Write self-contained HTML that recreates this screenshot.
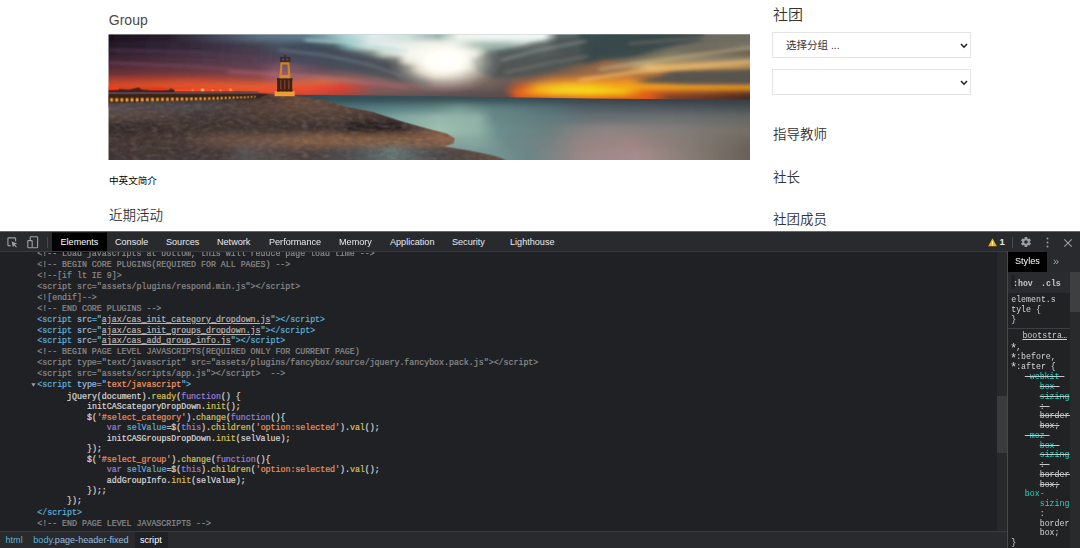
<!DOCTYPE html>
<html lang="zh">
<head>
<meta charset="utf-8">
<title>Group</title>
<style>
*{box-sizing:border-box;margin:0;padding:0}
html,body{width:1080px;height:548px;overflow:hidden;background:#fff}
body{position:relative;font-family:"Liberation Sans","Noto Sans CJK SC",sans-serif;color:#333}
.abs{position:absolute;white-space:nowrap}
/* ---------- page ---------- */
#page{position:absolute;left:0;top:0;width:1080px;height:231px;background:#fff;overflow:hidden}
.h-group{left:108.8px;top:11.2px;font-size:14px;line-height:18px;color:#4a4a4a;font-weight:400}
.cjk-h{font-size:13.5px;line-height:18px;color:#333;font-weight:350}
.sel{position:absolute;left:772px;width:199px;height:26px;border:1px solid #e4e4e4;background:#fff}
.sel span{position:absolute;left:13px;top:0;line-height:25px;font-size:10.5px;color:#333}
.sel svg{position:absolute;right:2px;top:9.5px}
#photo{position:absolute;left:108px;top:34px;width:643px;height:127px;overflow:hidden}
/* ---------- devtools ---------- */
#dt{position:absolute;left:0;top:231px;width:1080px;height:317px;background:#202124;overflow:hidden;font-family:"Liberation Sans",sans-serif}
#tb{position:absolute;left:0;top:0;width:1080px;height:20px;background:#292a2d;border-top:1px solid #67686a}
#tb .tab{position:absolute;top:0;transform:translateY(0.6px);height:19px;line-height:19px;font-size:9.1px;color:#e8eaed;white-space:nowrap}
#tb .act{left:52px;width:54.5px;background:#000;height:20px;top:0;color:#fff}
#tbline{position:absolute;left:0;top:20px;width:1080px;height:1px;background:#3a3b3e}
.code{position:absolute;left:0;font-family:"Liberation Mono",monospace;font-size:8.28px;line-height:11px;height:11px;white-space:pre;color:#d5d5d5;-webkit-text-stroke:0.22px}
.c{color:#898989}.t{color:#5db0d7}.an{color:#9bbbdc}.av{color:#f29766}
.k{color:#9a7fd5}.s{color:#f28b54}.f{color:#d2c057}.d{color:#5db0d7}
.u{text-decoration:underline}.lk{color:#b4b4b4}
#side{position:absolute;left:1007px;top:20px;width:73px;height:297px;background:#212224;border-left:1px solid #47484b;overflow:hidden}
.p{color:#27d6c7}.st{text-decoration:line-through;text-decoration-color:#c8c8c8}
.as{display:inline-block;width:4.97px;font-size:12px;line-height:0;position:relative;top:2.6px;left:-1.1px}
.sc{position:absolute;font-family:"Liberation Mono",monospace;font-size:8.25px;line-height:9.75px;white-space:pre;color:#d5d5d5}
#crumbs{position:absolute;left:0;top:300px;width:1007px;height:18px;background:#292a2d;border-top:1px solid #3a3b3e;font-size:9.1px;line-height:16px;white-space:nowrap}
</style>
</head>
<body>
<div id="page">
  <div class="abs h-group">Group</div>
  <div id="photo">
<svg width="643" height="127" viewBox="0 0 643 127" style="display:block">
<defs>
<linearGradient id="k0" gradientUnits="userSpaceOnUse" x1="-20" y1="0" x2="661" y2="0"><stop offset="0.0294" stop-color="#1a101c"/><stop offset="0.1175" stop-color="#2a1e2c"/><stop offset="0.1909" stop-color="#46485a"/><stop offset="0.2496" stop-color="#5a7080"/><stop offset="0.3157" stop-color="#5e7c8a"/><stop offset="0.3451" stop-color="#7a9ea6"/><stop offset="0.3744" stop-color="#a8d0d0"/><stop offset="0.4185" stop-color="#e0ecec"/><stop offset="0.4699" stop-color="#cfe0dc"/><stop offset="0.5140" stop-color="#8aa8a8"/><stop offset="0.5433" stop-color="#f0f8f4"/><stop offset="0.6681" stop-color="#f0f8f4"/><stop offset="0.6902" stop-color="#5a6a68"/><stop offset="0.7342" stop-color="#5a7878"/><stop offset="0.7636" stop-color="#3a4a4c"/><stop offset="0.8370" stop-color="#4a5452"/><stop offset="0.8957" stop-color="#66675c"/><stop offset="0.9706" stop-color="#6e6c60"/></linearGradient>
<linearGradient id="k1" gradientUnits="userSpaceOnUse" x1="-20" y1="0" x2="661" y2="0"><stop offset="0.0294" stop-color="#241826"/><stop offset="0.1468" stop-color="#34283a"/><stop offset="0.2496" stop-color="#44404f"/><stop offset="0.2790" stop-color="#4a5868"/><stop offset="0.3231" stop-color="#3a4a58"/><stop offset="0.3598" stop-color="#4a6068"/><stop offset="0.3818" stop-color="#8ab8b8"/><stop offset="0.4112" stop-color="#e0ece8"/><stop offset="0.4993" stop-color="#f4f8f0"/><stop offset="0.5360" stop-color="#e8f0e8"/><stop offset="0.5653" stop-color="#a0b8b0"/><stop offset="0.6167" stop-color="#a0b8b0"/><stop offset="0.6388" stop-color="#c8d4cc"/><stop offset="0.6725" stop-color="#c0ccc4"/><stop offset="0.6902" stop-color="#4a5858"/><stop offset="0.7930" stop-color="#3a484a"/><stop offset="0.8223" stop-color="#5a5a52"/><stop offset="0.8664" stop-color="#6c6a5e"/><stop offset="0.9706" stop-color="#787264"/></linearGradient>
<linearGradient id="k2" gradientUnits="userSpaceOnUse" x1="-20" y1="0" x2="661" y2="0"><stop offset="0.0294" stop-color="#2e1e2c"/><stop offset="0.1468" stop-color="#3e2c3e"/><stop offset="0.2496" stop-color="#4a3e4f"/><stop offset="0.2863" stop-color="#4a4a5a"/><stop offset="0.3231" stop-color="#3a4050"/><stop offset="0.3671" stop-color="#3a4252"/><stop offset="0.3891" stop-color="#5a6a70"/><stop offset="0.4141" stop-color="#7a8a88"/><stop offset="0.4332" stop-color="#d0dcd0"/><stop offset="0.4699" stop-color="#ffffff"/><stop offset="0.5507" stop-color="#ffffff"/><stop offset="0.5698" stop-color="#d8e0d0"/><stop offset="0.5874" stop-color="#6a7a74"/><stop offset="0.6461" stop-color="#6a7a74"/><stop offset="0.6681" stop-color="#8a9088"/><stop offset="0.6931" stop-color="#4a5050"/><stop offset="0.7342" stop-color="#2e3a3c"/><stop offset="0.7636" stop-color="#3e4644"/><stop offset="0.7930" stop-color="#52524a"/><stop offset="0.8517" stop-color="#7a7664"/><stop offset="0.9104" stop-color="#746a58"/><stop offset="0.9706" stop-color="#6c6050"/></linearGradient>
<linearGradient id="k3" gradientUnits="userSpaceOnUse" x1="-20" y1="0" x2="661" y2="0"><stop offset="0.0294" stop-color="#3e2432"/><stop offset="0.1468" stop-color="#4e3444"/><stop offset="0.2496" stop-color="#564052"/><stop offset="0.2937" stop-color="#5a4a5a"/><stop offset="0.3377" stop-color="#4a4858"/><stop offset="0.4038" stop-color="#4a4858"/><stop offset="0.4258" stop-color="#5a6060"/><stop offset="0.4523" stop-color="#6a6c68"/><stop offset="0.4670" stop-color="#e8e8d8"/><stop offset="0.4993" stop-color="#ffffff"/><stop offset="0.5507" stop-color="#ffffff"/><stop offset="0.5698" stop-color="#e0e0c8"/><stop offset="0.5844" stop-color="#5a6460"/><stop offset="0.6608" stop-color="#5a6460"/><stop offset="0.6755" stop-color="#4a4e4c"/><stop offset="0.7195" stop-color="#4e4a44"/><stop offset="0.7342" stop-color="#6a5040"/><stop offset="0.7562" stop-color="#a86840"/><stop offset="0.7856" stop-color="#786e5c"/><stop offset="0.8517" stop-color="#9c8a62"/><stop offset="0.9104" stop-color="#96886e"/><stop offset="0.9706" stop-color="#8e826c"/></linearGradient>
<linearGradient id="k4" gradientUnits="userSpaceOnUse" x1="-20" y1="0" x2="661" y2="0"><stop offset="0.0294" stop-color="#502a38"/><stop offset="0.1468" stop-color="#5c3644"/><stop offset="0.2496" stop-color="#624252"/><stop offset="0.2863" stop-color="#7a5a68"/><stop offset="0.3377" stop-color="#5a4a58"/><stop offset="0.3965" stop-color="#4a4a54"/><stop offset="0.4699" stop-color="#4a5050"/><stop offset="0.4846" stop-color="#c0b8a0"/><stop offset="0.5022" stop-color="#fff8e0"/><stop offset="0.5433" stop-color="#fff8e0"/><stop offset="0.5609" stop-color="#c8c0a8"/><stop offset="0.5800" stop-color="#5a5a56"/><stop offset="0.6755" stop-color="#5e5852"/><stop offset="0.6975" stop-color="#6a5a4c"/><stop offset="0.7342" stop-color="#8a6448"/><stop offset="0.7930" stop-color="#b08050"/><stop offset="0.8223" stop-color="#e8c080"/><stop offset="0.8590" stop-color="#d8a860"/><stop offset="0.9706" stop-color="#c09050"/></linearGradient>
<linearGradient id="k5" gradientUnits="userSpaceOnUse" x1="-20" y1="0" x2="661" y2="0"><stop offset="0.0294" stop-color="#6c3034"/><stop offset="0.1468" stop-color="#78383c"/><stop offset="0.2496" stop-color="#7c444c"/><stop offset="0.2717" stop-color="#9a5a68"/><stop offset="0.3231" stop-color="#7a5560"/><stop offset="0.4112" stop-color="#6a5a5c"/><stop offset="0.4699" stop-color="#80706a"/><stop offset="0.5081" stop-color="#d8c8a8"/><stop offset="0.5286" stop-color="#c8b8a0"/><stop offset="0.5580" stop-color="#9a8a80"/><stop offset="0.5874" stop-color="#726864"/><stop offset="0.6167" stop-color="#5e5856"/><stop offset="0.6535" stop-color="#66584c"/><stop offset="0.6902" stop-color="#80604a"/><stop offset="0.7342" stop-color="#a06c44"/><stop offset="0.8076" stop-color="#b07440"/><stop offset="0.8370" stop-color="#b87838"/><stop offset="0.8590" stop-color="#6a5c52"/><stop offset="0.9706" stop-color="#5a5550"/></linearGradient>
<linearGradient id="k6" gradientUnits="userSpaceOnUse" x1="-20" y1="0" x2="661" y2="0"><stop offset="0.0294" stop-color="#b03e2e"/><stop offset="0.1468" stop-color="#c04830"/><stop offset="0.2496" stop-color="#a84c40"/><stop offset="0.2717" stop-color="#a85a58"/><stop offset="0.3084" stop-color="#c06850"/><stop offset="0.3451" stop-color="#d07048"/><stop offset="0.3818" stop-color="#a86858"/><stop offset="0.4112" stop-color="#8e6464"/><stop offset="0.4993" stop-color="#8a6e68"/><stop offset="0.5580" stop-color="#847068"/><stop offset="0.6167" stop-color="#6e5c56"/><stop offset="0.6461" stop-color="#8a6048"/><stop offset="0.6828" stop-color="#d07c30"/><stop offset="0.7342" stop-color="#e88a28"/><stop offset="0.7930" stop-color="#e88a28"/><stop offset="0.8223" stop-color="#a06838"/><stop offset="0.8811" stop-color="#6a5a50"/><stop offset="0.9706" stop-color="#5a5550"/></linearGradient>
<linearGradient id="k7" gradientUnits="userSpaceOnUse" x1="-20" y1="0" x2="661" y2="0"><stop offset="0.0294" stop-color="#e04a20"/><stop offset="0.1468" stop-color="#ee5626"/><stop offset="0.2496" stop-color="#ec5c2e"/><stop offset="0.3231" stop-color="#f05030"/><stop offset="0.3700" stop-color="#e04030"/><stop offset="0.4229" stop-color="#8a5a58"/><stop offset="0.4993" stop-color="#846664"/><stop offset="0.5580" stop-color="#7c6662"/><stop offset="0.6109" stop-color="#665855"/><stop offset="0.6344" stop-color="#c85a28"/><stop offset="0.6637" stop-color="#f8a818"/><stop offset="0.6975" stop-color="#f8c820"/><stop offset="0.7342" stop-color="#f8c818"/><stop offset="0.7783" stop-color="#f8a818"/><stop offset="0.9706" stop-color="#f8a018"/></linearGradient>
<linearGradient id="k8" gradientUnits="userSpaceOnUse" x1="-20" y1="0" x2="661" y2="0"><stop offset="0.0294" stop-color="#802818"/><stop offset="0.1175" stop-color="#a03020"/><stop offset="0.1762" stop-color="#c04028"/><stop offset="0.2203" stop-color="#e05030"/><stop offset="0.2643" stop-color="#f05030"/><stop offset="0.3231" stop-color="#e84830"/><stop offset="0.3700" stop-color="#d04030"/><stop offset="0.4229" stop-color="#7a5a5a"/><stop offset="0.4993" stop-color="#6a5a58"/><stop offset="0.6079" stop-color="#5a5050"/><stop offset="0.6256" stop-color="#d85a22"/><stop offset="0.6535" stop-color="#f8a818"/><stop offset="0.6828" stop-color="#f8d820"/><stop offset="0.7342" stop-color="#fae418"/><stop offset="0.7856" stop-color="#f8cc10"/><stop offset="0.8150" stop-color="#e86818"/><stop offset="0.8517" stop-color="#c05820"/><stop offset="0.9104" stop-color="#9a5028"/><stop offset="0.9706" stop-color="#6a3820"/></linearGradient>
<linearGradient id="k9" gradientUnits="userSpaceOnUse" x1="-20" y1="0" x2="661" y2="0"><stop offset="0.0294" stop-color="#5a3020"/><stop offset="0.3084" stop-color="#c04030"/><stop offset="0.4141" stop-color="#6a5050"/><stop offset="0.6167" stop-color="#5a4a48"/><stop offset="0.6285" stop-color="#e05020"/><stop offset="0.7342" stop-color="#f07018"/><stop offset="0.8223" stop-color="#e05818"/><stop offset="0.8517" stop-color="#7a4028"/><stop offset="0.9706" stop-color="#4a2a20"/></linearGradient>
<linearGradient id="s0" gradientUnits="userSpaceOnUse" x1="-20" y1="0" x2="661" y2="0"><stop offset="0.3084" stop-color="#2e4e56"/><stop offset="0.4993" stop-color="#385156"/><stop offset="0.6167" stop-color="#395057"/><stop offset="0.7342" stop-color="#38444f"/><stop offset="0.9706" stop-color="#353d44"/></linearGradient>
<linearGradient id="s1" gradientUnits="userSpaceOnUse" x1="-20" y1="0" x2="661" y2="0"><stop offset="0.3084" stop-color="#497076"/><stop offset="0.4112" stop-color="#577f84"/><stop offset="0.4993" stop-color="#638788"/><stop offset="0.5433" stop-color="#789e97"/><stop offset="0.5874" stop-color="#628585"/><stop offset="0.6755" stop-color="#557176"/><stop offset="0.7342" stop-color="#515f66"/><stop offset="0.8517" stop-color="#515a61"/><stop offset="0.9706" stop-color="#4a5256"/></linearGradient>
<linearGradient id="s2" gradientUnits="userSpaceOnUse" x1="-20" y1="0" x2="661" y2="0"><stop offset="0.3818" stop-color="#5c8387"/><stop offset="0.4552" stop-color="#83a9a3"/><stop offset="0.5140" stop-color="#97b9ac"/><stop offset="0.5727" stop-color="#90b2a8"/><stop offset="0.5947" stop-color="#688989"/><stop offset="0.6755" stop-color="#607b7e"/><stop offset="0.7342" stop-color="#677275"/><stop offset="0.8517" stop-color="#6f7274"/><stop offset="0.9706" stop-color="#676864"/></linearGradient>
<linearGradient id="s3" gradientUnits="userSpaceOnUse" x1="-20" y1="0" x2="661" y2="0"><stop offset="0.4552" stop-color="#87ada7"/><stop offset="0.5140" stop-color="#9fc1b0"/><stop offset="0.5727" stop-color="#90b2a8"/><stop offset="0.6021" stop-color="#6a8d8d"/><stop offset="0.6755" stop-color="#6c7f7f"/><stop offset="0.7195" stop-color="#848282"/><stop offset="0.7636" stop-color="#908583"/><stop offset="0.8517" stop-color="#857f7b"/><stop offset="0.9706" stop-color="#736e65"/></linearGradient>
<linearGradient id="s4" gradientUnits="userSpaceOnUse" x1="-20" y1="0" x2="661" y2="0"><stop offset="0.5140" stop-color="#88a69f"/><stop offset="0.5727" stop-color="#85a69f"/><stop offset="0.6167" stop-color="#6a8989"/><stop offset="0.6755" stop-color="#768181"/><stop offset="0.7195" stop-color="#928583"/><stop offset="0.7930" stop-color="#9f8684"/><stop offset="0.8811" stop-color="#847b75"/><stop offset="0.9706" stop-color="#6d655c"/></linearGradient>
<linearGradient id="s5" gradientUnits="userSpaceOnUse" x1="-20" y1="0" x2="661" y2="0"><stop offset="0.5874" stop-color="#779696"/><stop offset="0.6461" stop-color="#698686"/><stop offset="0.6902" stop-color="#848484"/><stop offset="0.7342" stop-color="#9f8886"/><stop offset="0.8076" stop-color="#a68c8c"/><stop offset="0.8811" stop-color="#887d75"/><stop offset="0.9706" stop-color="#696058"/></linearGradient>
<linearGradient id="g0" gradientUnits="userSpaceOnUse" x1="-20" y1="0" x2="661" y2="0"><stop offset="0.0294" stop-color="#31211b"/><stop offset="0.2496" stop-color="#3e2e28"/><stop offset="0.3025" stop-color="#674835"/><stop offset="0.3671" stop-color="#5a4137"/></linearGradient>
<linearGradient id="g1" gradientUnits="userSpaceOnUse" x1="-20" y1="0" x2="661" y2="0"><stop offset="0.0294" stop-color="#534d52"/><stop offset="0.1762" stop-color="#4f494e"/><stop offset="0.2129" stop-color="#4c3f3b"/><stop offset="0.2643" stop-color="#5a4137"/><stop offset="0.3231" stop-color="#674b3b"/><stop offset="0.4112" stop-color="#564037"/></linearGradient>
<linearGradient id="g2" gradientUnits="userSpaceOnUse" x1="-20" y1="0" x2="661" y2="0"><stop offset="0.0294" stop-color="#5a4842"/><stop offset="0.1175" stop-color="#4f403b"/><stop offset="0.1615" stop-color="#3e3331"/><stop offset="0.2643" stop-color="#4d3b33"/><stop offset="0.3671" stop-color="#554039"/><stop offset="0.4552" stop-color="#3e312e"/></linearGradient>
<linearGradient id="g3" gradientUnits="userSpaceOnUse" x1="-20" y1="0" x2="661" y2="0"><stop offset="0.0294" stop-color="#312928"/><stop offset="0.1028" stop-color="#362b2b"/><stop offset="0.1322" stop-color="#3e312e"/><stop offset="0.3671" stop-color="#3e312e"/><stop offset="0.3891" stop-color="#231c1f"/><stop offset="0.4552" stop-color="#262020"/><stop offset="0.4772" stop-color="#4c3b35"/><stop offset="0.5286" stop-color="#96674a"/></linearGradient>
<linearGradient id="g4" gradientUnits="userSpaceOnUse" x1="-20" y1="0" x2="661" y2="0"><stop offset="0.0294" stop-color="#3e312e"/><stop offset="0.1395" stop-color="#453630"/><stop offset="0.1909" stop-color="#674d3f"/><stop offset="0.2643" stop-color="#755544"/><stop offset="0.3231" stop-color="#886144"/><stop offset="0.4699" stop-color="#886144"/><stop offset="0.5140" stop-color="#8f6347"/><stop offset="0.5360" stop-color="#96674a"/></linearGradient>
<linearGradient id="g5" gradientUnits="userSpaceOnUse" x1="-20" y1="0" x2="661" y2="0"><stop offset="0.0294" stop-color="#3e3331"/><stop offset="0.1982" stop-color="#423635"/><stop offset="0.2276" stop-color="#555253"/><stop offset="0.2643" stop-color="#514947"/><stop offset="0.3231" stop-color="#4a3e3b"/><stop offset="0.3744" stop-color="#4a494c"/><stop offset="0.4141" stop-color="#555f61"/><stop offset="0.4479" stop-color="#647c79"/><stop offset="0.4846" stop-color="#535a5a"/><stop offset="0.5213" stop-color="#484445"/><stop offset="0.5580" stop-color="#554640"/><stop offset="0.6021" stop-color="#675144"/></linearGradient>
<filter id="vb" x="-5%" y="-30%" width="110%" height="160%"><feGaussianBlur stdDeviation="1.5 2.6"/></filter>
<filter id="vb2" x="-5%" y="-30%" width="110%" height="160%"><feGaussianBlur stdDeviation="2 3"/></filter>
<filter id="b05"><feGaussianBlur stdDeviation="0.5"/></filter>
<filter id="b3" x="-20%" y="-50%" width="140%" height="200%"><feGaussianBlur stdDeviation="3 2.2"/></filter>
<filter id="b2" x="-20%" y="-50%" width="140%" height="200%"><feGaussianBlur stdDeviation="2 1.4"/></filter>
<linearGradient id="dc1" gradientUnits="userSpaceOnUse" x1="150" y1="0" x2="330" y2="0"><stop offset="0" stop-color="#3e4254" stop-opacity="0.0"/><stop offset="0.25" stop-color="#444c5c" stop-opacity="0.85"/><stop offset="0.7" stop-color="#4c5258" stop-opacity="0.85"/><stop offset="1" stop-color="#5a5654" stop-opacity="0.75"/></linearGradient>
<filter id="grainD" x="0" y="0" width="100%" height="100%"><feTurbulence type="fractalNoise" baseFrequency="0.16 0.34" numOctaves="3" seed="7"/><feColorMatrix type="matrix" values="0 0 0 0 0.1  0 0 0 0 0.08  0 0 0 0 0.08  1.4 1.4 0 0 -1.15"/><feGaussianBlur stdDeviation="0.5"/></filter>
<filter id="grainL" x="0" y="0" width="100%" height="100%"><feTurbulence type="fractalNoise" baseFrequency="0.14 0.3" numOctaves="3" seed="23"/><feColorMatrix type="matrix" values="0 0 0 0 0.82  0 0 0 0 0.64  0 0 0 0 0.52  0 1.5 1.5 0 -1.3"/><feGaussianBlur stdDeviation="0.5"/></filter>
<radialGradient id="sunG" cx="0.5" cy="0.5" r="0.5"><stop offset="0" stop-color="#fff" stop-opacity="1"/><stop offset="0.3" stop-color="#fffef6" stop-opacity="0.92"/><stop offset="0.6" stop-color="#f6f4e8" stop-opacity="0.5"/><stop offset="0.85" stop-color="#eeeade" stop-opacity="0.12"/><stop offset="1" stop-color="#e8e4d8" stop-opacity="0"/></radialGradient>
<filter id="b1"><feGaussianBlur stdDeviation="0.9"/></filter>
<clipPath id="cAll"><rect x="0" y="0" width="641.4" height="125.5"/></clipPath>
<clipPath id="cSea"><path d="M150 60.2 L190 60.4 L320 61.5 L480 64.2 L641 65.3 L660 65.4 L660 140 L150 140 Z"/></clipPath>
<clipPath id="cGnd"><path d="M-5 58 L150 58.8 L186 61.5 L205 64 L219 66.4 L234 71.6 L264 77.5 L293 87 L320 94.5 L338 99 L346 104 L345 109 L336 112 L360 116 L387 121.5 L398 126 L-5 126 Z"/></clipPath>
</defs>
<g transform="translate(0.6,0.42)" clip-path="url(#cAll)">
<rect x="0" y="0" width="642" height="126" fill="#50505a"/>
<g filter="url(#vb)">
<rect x="-20" y="-12" width="681" height="19.3" fill="url(#k0)"/>
<rect x="-20" y="7" width="681" height="8.3" fill="url(#k1)"/>
<rect x="-20" y="15" width="681" height="7.3" fill="url(#k2)"/>
<rect x="-20" y="22" width="681" height="7.3" fill="url(#k3)"/>
<rect x="-20" y="29" width="681" height="7.3" fill="url(#k4)"/>
<rect x="-20" y="36" width="681" height="7.3" fill="url(#k5)"/>
<rect x="-20" y="43" width="681" height="6.3" fill="url(#k6)"/>
<rect x="-20" y="49" width="681" height="6.3" fill="url(#k7)"/>
<rect x="-20" y="55" width="681" height="5.3" fill="url(#k8)"/>
<rect x="-20" y="60" width="681" height="12.3" fill="url(#k9)"/>
</g>
<g filter="url(#b3)">
  <!-- dark diagonal cloud band left of sun -->
  <path d="M150 8 L204 12.5 L249 19 L279 29 L322 45 L322 52 L279 45 L249 37 L204 29.5 L150 25 Z" fill="url(#dc1)"/>
  <!-- dark cloud right of sun -->
  <path d="M361 25 L387 17.5 L424 8.5 L482 -2 L482 25 L440 38 L388 44 L369 36.5 Z" fill="#4e5654" opacity="0.82"/>
  <!-- dark teal top right -->
  <path d="M470 -4 L600 -4 L590 6 L560 12 L525 22 L476 29 Z" fill="#38484a" opacity="0.9"/>
  <!-- dark band over orange at right -->
  <path d="M528 47 L565 38 L650 35 L650 50 L580 49.5 Z" fill="#57524e" opacity="0.95"/>
</g>
<g filter="url(#b2)">
  <!-- light teal streaks above dark band -->
  <path d="M196 4 L240 6 L300 16 L300 19 L240 10 L196 7 Z" fill="#b8dcdc" opacity="0.55"/>
  <!-- pink streaks lower left-center -->
  <path d="M120 36 L200 40 L260 47 L300 52 L300 54 L260 50 L200 43.5 L120 39 Z" fill="#b86a78" opacity="0.5"/>
  <path d="M0 27 L90 31 L160 37 L160 39 L90 33.5 L0 29.5 Z" fill="#8a5668" opacity="0.45"/>
  <path d="M0 14 L90 17 L170 24 L170 26 L90 19.5 L0 16.5 Z" fill="#5e4458" opacity="0.5"/>
  <!-- tan streaks at right going up-right -->
  <path d="M490 33 L560 22 L650 10 L650 14 L560 27 L490 37 Z" fill="#c8b890" opacity="0.4"/>
  <path d="M470 44 L540 33 L650 24 L650 29 L540 38 L470 48 Z" fill="#f0c070" opacity="0.55"/>
  <path d="M520 8 L600 1 L650 -1 L650 2 L600 4 L520 11 Z" fill="#7a7468" opacity="0.5"/>
</g>
<ellipse cx="336" cy="27" rx="58" ry="32" fill="url(#sunG)"/>
<g filter="url(#b2)">
  <path d="M170 14 L215 19 L262 29 L300 43 L300 45 L262 32 L215 22 L170 17 Z" fill="#7a8a98" opacity="0.45"/>
  <path d="M392 24 L430 14 L478 5 L478 8 L430 17.5 L392 28 Z" fill="#8a9a94" opacity="0.5"/>
  <path d="M396 36 L440 27 L480 20 L480 23 L440 30.5 L396 40 Z" fill="#7a7e78" opacity="0.45"/>
</g>

<g clip-path="url(#cSea)"><g filter="url(#vb2)">
<rect x="-20" y="48" width="681" height="22.3" fill="url(#s0)"/>
<rect x="-20" y="70" width="681" height="9.3" fill="url(#s1)"/>
<rect x="-20" y="79" width="681" height="11.3" fill="url(#s2)"/>
<rect x="-20" y="90" width="681" height="12.3" fill="url(#s3)"/>
<rect x="-20" y="102" width="681" height="12.3" fill="url(#s4)"/>
<rect x="-20" y="114" width="681" height="26.3" fill="url(#s5)"/>
</g></g>
<g clip-path="url(#cGnd)"><g filter="url(#vb2)">
<rect x="-20" y="48" width="681" height="20.3" fill="url(#g0)"/>
<rect x="-20" y="68" width="681" height="8.3" fill="url(#g1)"/>
<rect x="-20" y="76" width="681" height="10.3" fill="url(#g2)"/>
<rect x="-20" y="86" width="681" height="14.3" fill="url(#g3)"/>
<rect x="-20" y="100" width="681" height="12.3" fill="url(#g4)"/>
<rect x="-20" y="112" width="681" height="28.3" fill="url(#g5)"/>
</g></g>
<g clip-path="url(#cGnd)"><rect x="0" y="60" width="400" height="66" filter="url(#grainD)" opacity="0.62"/><rect x="0" y="60" width="400" height="66" filter="url(#grainL)" opacity="0.13"/></g>
<!-- city lights / silhouettes -->
<g filter="url(#b05)">
  <path d="M0 56 L8 54.5 L20 55.5 L30 53 L34 55.5 L60 56 L62 54 L66 56 L150 57.5 L150 59 L0 59 Z" fill="#3a1a18" opacity="0.85"/>
  <rect x="0" y="52.5" width="10" height="3" fill="#ff3a18"/>
  <rect x="40" y="53.5" width="16" height="2.5" fill="#f03018"/>
  <rect x="66" y="54.2" width="60" height="3" fill="#ff4a20"/>
  <circle cx="94" cy="55.5" r="1.6" fill="#ffd070"/>
  <circle cx="122" cy="55.5" r="1.3" fill="#ffc060"/>
  <circle cx="104" cy="56" r="1" fill="#ffb050"/>
  <circle cx="112" cy="56" r="1" fill="#ffb050"/>
  <circle cx="84" cy="55.8" r="1" fill="#ff9040"/>
</g>
<!-- far water strip + pier -->
<rect x="0" y="58" width="150" height="1.6" fill="#5a6070" filter="url(#b05)"/>
<path d="M0 59.6 L150 59.2 L160 60 L150 63.4 L0 68.6 Z" fill="#3a2416" filter="url(#b05)"/>
<g fill="#e89a30" filter="url(#b05)">
  <rect x="1.5" y="63.7" width="3" height="3.6"/><rect x="6.6" y="63.7" width="3" height="3.6"/><rect x="11.7" y="63.7" width="3" height="3.6"/><rect x="16.8" y="63.7" width="3" height="3.6"/><rect x="21.9" y="63.6" width="3" height="3.6"/><rect x="27" y="63.6" width="3" height="3.5"/><rect x="32.1" y="63.5" width="3" height="3.5"/><rect x="37.2" y="63.5" width="3" height="3.4"/><rect x="42.3" y="63.4" width="3" height="3.4"/><rect x="47.4" y="63.4" width="2.9" height="3.3"/><rect x="52.4" y="63.3" width="2.9" height="3.3"/><rect x="57.4" y="63.3" width="2.8" height="3.2"/><rect x="62.3" y="63.2" width="2.8" height="3.2"/><rect x="67.2" y="63.2" width="2.7" height="3.1"/><rect x="72" y="63.1" width="2.7" height="3"/><rect x="76.8" y="63.1" width="2.6" height="3"/><rect x="81.5" y="63.0" width="2.6" height="2.9"/><rect x="86.1" y="63.0" width="2.5" height="2.8"/><rect x="90.6" y="62.9" width="2.5" height="2.8"/><rect x="95" y="62.9" width="2.4" height="2.7"/><rect x="99.4" y="62.8" width="2.4" height="2.6"/><rect x="103.7" y="62.7" width="2.3" height="2.5"/><rect x="107.9" y="62.6" width="2.3" height="2.4"/><rect x="112" y="62.5" width="2.2" height="2.3"/><rect x="116" y="62.4" width="2.2" height="2.2"/><rect x="120" y="62.3" width="2.1" height="2.1"/><rect x="123.9" y="62.2" width="2.1" height="2"/><rect x="127.7" y="62.1" width="2" height="1.9"/><rect x="131.4" y="62.0" width="2" height="1.8"/><rect x="135" y="61.9" width="1.9" height="1.7"/><rect x="138.5" y="61.8" width="1.9" height="1.6"/><rect x="142" y="61.7" width="1.8" height="1.4"/><rect x="145.4" y="61.6" width="1.8" height="1.2"/>
</g>
<!-- lighthouse -->
<g filter="url(#b05)">
  <rect x="166" y="56.8" width="20" height="5" fill="#f0a030"/>
  <rect x="168.4" y="43.8" width="15.4" height="2.2" fill="#3a2418"/>
  <rect x="168.4" y="54.8" width="15.4" height="2.2" fill="#3a2418"/>
  <rect x="168.6" y="44" width="2.8" height="13" fill="#3a2418"/>
  <rect x="173" y="44" width="2.2" height="13" fill="#3f281a"/>
  <rect x="177" y="44" width="2.2" height="13" fill="#3f281a"/>
  <rect x="180.8" y="44" width="2.8" height="13" fill="#3a2418"/>
  <rect x="171.4" y="46" width="9.4" height="9" fill="#2e1c16" opacity="0.55"/>
  <path d="M170.6 43.8 L172 27.5 L180.6 27.5 L182 43.8 L179.6 43.8 L178.8 30 L173.8 30 L173 43.8 Z" fill="#d08428"/>
  <rect x="171.8" y="40.6" width="9.2" height="3.2" fill="#d88a30"/>
  <rect x="171.4" y="22.5" width="10.4" height="1.6" fill="#3a2a30"/>
  <rect x="171.4" y="26" width="10.4" height="1.8" fill="#3a2a30"/>
  <rect x="171.6" y="22.5" width="1.8" height="5" fill="#3a2a30"/><rect x="175.7" y="20.6" width="1.8" height="7" fill="#3a2a30"/><rect x="179.8" y="22.5" width="1.8" height="5" fill="#3a2a30"/>
</g>

</g>
</svg>
  </div>
  <div class="abs" style="left:109px;top:173px;font-size:9.6px;line-height:15px;color:#000;font-weight:400">中英文简介</div>
  <div class="abs cjk-h" style="left:109px;top:207px">近期活动</div>

  <div class="abs" style="left:773px;top:5px;font-size:15px;line-height:20px;color:#333;font-weight:350">社团</div>
  <div class="sel" style="top:32px"><span>选择分组 ...</span><svg width="8" height="6" viewBox="0 0 8 6"><path d="M1 1 L4 4.2 L7 1" fill="none" stroke="#222" stroke-width="1.5"/></svg></div>
  <div class="sel" style="top:69px"><svg width="8" height="6" viewBox="0 0 8 6"><path d="M1 1 L4 4.2 L7 1" fill="none" stroke="#222" stroke-width="1.5"/></svg></div>
  <div class="abs cjk-h" style="left:773px;top:125.6px">指导教师</div>
  <div class="abs cjk-h" style="left:773px;top:168.6px">社长</div>
  <div class="abs cjk-h" style="left:773px;top:211.2px">社团成员</div>
</div>

<div id="dt">
  <div id="tb">
    <div class="tab act"><span style="position:absolute;left:8.5px">Elements</span></div>
    <div class="tab" style="left:115px">Console</div>
    <div class="tab" style="left:166px">Sources</div>
    <div class="tab" style="left:217px">Network</div>
    <div class="tab" style="left:269px">Performance</div>
    <div class="tab" style="left:339px">Memory</div>
    <div class="tab" style="left:390px">Application</div>
    <div class="tab" style="left:452px">Security</div>
    <div class="tab" style="left:510px">Lighthouse</div>

    <svg class="abs" style="left:6px;top:4px" width="13" height="13" viewBox="0 0 13 13"><path d="M9.6 5.2 V2.6 Q9.6 1.9 8.9 1.9 H2.6 Q1.9 1.9 1.9 2.6 V8.9 Q1.9 9.6 2.6 9.6 H4.6" fill="none" stroke="#9aa0a6" stroke-width="1.1"/><path d="M5.6 5.6 L11.2 7.6 L8.9 8.6 L10.9 10.9 L10.1 11.6 L8.1 9.4 L6.9 11.3 Z" fill="#9aa0a6"/></svg>
    <svg class="abs" style="left:26px;top:3px" width="14" height="15" viewBox="0 0 14 15"><path d="M4.2 5 V2.4 Q4.2 1.7 4.9 1.7 H10.9 Q11.6 1.7 11.6 2.4 V12.1 Q11.6 12.8 10.9 12.8 H6.4" fill="none" stroke="#9aa0a6" stroke-width="1.1"/><rect x="1.8" y="5.6" width="4.4" height="7.2" rx="0.6" fill="none" stroke="#9aa0a6" stroke-width="1.1"/></svg>
    <div class="abs" style="left:46.5px;top:5px;width:1px;height:11px;background:#46474a"></div>
    <svg class="abs" style="left:988px;top:5.5px" width="9" height="9" viewBox="0 0 9 9"><path d="M4.5 0.3 L8.8 8.3 H0.2 Z" fill="#f4b400"/><rect x="4" y="3.2" width="1" height="2.8" fill="#fff"/><rect x="4" y="6.6" width="1" height="1" fill="#fff"/></svg>
    <div class="abs" style="left:999.6px;top:0;font-size:9.4px;line-height:19.5px;color:#e8eaed;font-weight:bold">1</div>
    <div class="abs" style="left:1012px;top:5px;width:1px;height:11px;background:#46474a"></div>
    <svg class="abs" style="left:1020px;top:4px" width="12" height="12" viewBox="0 0 24 24"><path fill="#9aa0a6" d="M19.43 12.98c.04-.32.07-.64.07-.98s-.03-.66-.07-.98l2.11-1.65c.19-.15.24-.42.12-.64l-2-3.46c-.12-.22-.39-.3-.61-.22l-2.49 1c-.52-.4-1.08-.73-1.69-.98l-.38-2.65C14.46 2.18 14.25 2 14 2h-4c-.25 0-.46.18-.49.42l-.38 2.65c-.61.25-1.17.59-1.69.98l-2.49-1c-.23-.09-.49 0-.61.22l-2 3.46c-.13.22-.07.49.12.64l2.11 1.65c-.04.32-.07.65-.07.98s.03.66.07.98l-2.11 1.65c-.19.15-.24.42-.12.64l2 3.46c.12.22.39.3.61.22l2.49-1c.52.4 1.08.73 1.69.98l.38 2.65c.03.24.24.42.49.42h4c.25 0 .46-.18.49-.42l.38-2.65c.61-.25 1.17-.59 1.69-.98l2.49 1c.23.09.49 0 .61-.22l2-3.46c.12-.22.07-.49-.12-.64l-2.11-1.65zM12 15.5c-1.93 0-3.500-1.570-3.500-3.500s1.570-3.500 3.500-3.500 3.500 1.570 3.500 3.500-1.570 3.500-3.500 3.500z"/></svg>
    <svg class="abs" style="left:1045px;top:5px" width="5" height="11" viewBox="0 0 5 11"><circle cx="2.5" cy="1.6" r="1" fill="#9aa0a6"/><circle cx="2.5" cy="5.5" r="1" fill="#9aa0a6"/><circle cx="2.5" cy="9.4" r="1" fill="#9aa0a6"/></svg>
    <svg class="abs" style="left:1063px;top:6px" width="10" height="10" viewBox="0 0 10 10"><path d="M1.3 1.3 L8.7 8.7 M8.7 1.3 L1.3 8.7" stroke="#9aa0a6" stroke-width="1.1" fill="none"/></svg>
  </div>
  <div id="tbline"></div>
  <div id="codes" style="position:absolute;left:0;top:20.6px;width:996.5px;height:279px;overflow:hidden">
<div class="code" style="top:-3.71px;left:37.30px"><span class="c">&lt;!-- Load javascripts at bottom, this will reduce page load time --&gt;</span></div>
<div class="code" style="top:7.24px;left:37.30px"><span class="c">&lt;!-- BEGIN CORE PLUGINS(REQUIRED FOR ALL PAGES) --&gt;</span></div>
<div class="code" style="top:18.19px;left:37.30px"><span class="c">&lt;!--[if lt IE 9]&gt;</span></div>
<div class="code" style="top:29.14px;left:37.30px"><span class="c">&lt;script src="assets/plugins/respond.min.js"&gt;&lt;/script&gt;</span></div>
<div class="code" style="top:40.09px;left:37.30px"><span class="c">&lt;![endif]--&gt;</span></div>
<div class="code" style="top:51.04px;left:37.30px"><span class="c">&lt;!-- END CORE PLUGINS --&gt;</span></div>
<div class="code" style="top:61.99px;left:37.30px"><span class="t">&lt;script </span><span class="an">src</span><span class="t">="</span><span class="lk u">ajax/cas_init_category_dropdown.js</span><span class="t">"&gt;&lt;/script&gt;</span></div>
<div class="code" style="top:72.94px;left:37.30px"><span class="t">&lt;script </span><span class="an">src</span><span class="t">="</span><span class="lk u">ajax/cas_init_groups_dropdown.js</span><span class="t">"&gt;&lt;/script&gt;</span></div>
<div class="code" style="top:83.89px;left:37.30px"><span class="t">&lt;script </span><span class="an">src</span><span class="t">="</span><span class="lk u">ajax/cas_add_group_info.js</span><span class="t">"&gt;&lt;/script&gt;</span></div>
<div class="code" style="top:94.84px;left:37.30px"><span class="c">&lt;!-- BEGIN PAGE LEVEL JAVASCRIPTS(REQUIRED ONLY FOR CURRENT PAGE)</span></div>
<div class="code" style="top:105.79px;left:37.30px"><span class="c">&lt;script type="text/javascript" src="assets/plugins/fancybox/source/jquery.fancybox.pack.js"&gt;&lt;/script&gt;</span></div>
<div class="code" style="top:116.74px;left:37.30px"><span class="c">&lt;script src="assets/scripts/app.js"&gt;&lt;/script&gt;  --&gt;</span></div>
<div class="code" style="top:127.69px;left:37.30px"><span class="t">&lt;script </span><span class="an">type</span><span class="t">="</span><span class="av">text/javascript</span><span class="t">"&gt;</span></div>
<div class="code" style="top:139.19px;left:67.10px">jQuery(document).<span class="f">ready</span>(<span class="k">function</span>() {</div>
<div class="code" style="top:149.66px;left:86.97px">initCAScategoryDropDown.<span class="f">init</span>();</div>
<div class="code" style="top:160.13px;left:86.97px">$(<span class="s">'#select_category'</span>).<span class="f">change</span>(<span class="k">function</span>(){</div>
<div class="code" style="top:170.60px;left:106.84px"><span class="k">var</span> <span class="d">selValue</span>=$(<span class="k">this</span>).<span class="f">children</span>(<span class="s">'option:selected'</span>).<span class="f">val</span>();</div>
<div class="code" style="top:181.07px;left:106.84px">initCASGroupsDropDown.<span class="f">init</span>(selValue);</div>
<div class="code" style="top:191.54px;left:86.97px">});</div>
<div class="code" style="top:202.01px;left:86.97px">$(<span class="s">'#select_group'</span>).<span class="f">change</span>(<span class="k">function</span>(){</div>
<div class="code" style="top:212.48px;left:106.84px"><span class="k">var</span> <span class="d">selValue</span>=$(<span class="k">this</span>).<span class="f">children</span>(<span class="s">'option:selected'</span>).<span class="f">val</span>();</div>
<div class="code" style="top:222.95px;left:106.84px">addGroupInfo.<span class="f">init</span>(selValue);</div>
<div class="code" style="top:233.42px;left:86.97px">});;</div>
<div class="code" style="top:243.89px;left:67.10px">});</div>
<div class="code" style="top:255.69px;left:37.30px"><span class="t">&lt;/script&gt;</span></div>
<div class="code" style="top:266.79px;left:37.30px"><span class="c">&lt;!-- END PAGE LEVEL JAVASCRIPTS --&gt;</span></div>
<svg class="abs" style="left:30.8px;top:131.30px" width="5" height="4" viewBox="0 0 5 4"><path d="M0.2 0.3 H4.6 L2.4 3.8 Z" fill="#9aa0a6"/></svg>
  </div>
  <div style="position:absolute;left:996.5px;top:21px;width:10.5px;height:279px;background:#28292b"></div>
  <div style="position:absolute;left:996.5px;top:165px;width:10.5px;height:57px;background:#3a3b3d"></div>
  <div id="side">
<div style="position:absolute;left:0;top:0;width:72px;height:21px;background:#292a2d"></div>
<div style="position:absolute;left:0;top:0.5px;width:39px;height:20.5px;background:#000"></div>
<div style="position:absolute;left:7px;top:1px;font-size:9.1px;line-height:19px;color:#fff">Styles</div>
<div style="position:absolute;left:45px;top:0.5px;font-size:11px;line-height:19px;color:#9aa0a6">»</div>
<div style="position:absolute;left:0;top:21px;width:61.5px;height:20.6px;background:#2a2b2e"></div>
<div style="position:absolute;left:3.2px;top:23.8px;width:3.7px;height:14.4px;background:#202124"></div>
<div class="sc" style="left:5.0px;top:27.70px;color:#c4c7cc"><b>:hov</b></div>
<div class="sc" style="left:33.0px;top:27.70px;color:#c4c7cc"><b>.cls</b></div>
<div class="sc" style="left:3.2px;top:44.30px;">element.s</div>
<div class="sc" style="left:3.2px;top:54.10px;">tyle {</div>
<div class="sc" style="left:3.2px;top:63.90px;">}</div>
<div style="position:absolute;left:0;top:77.2px;width:61.5px;height:1px;background:#3d3e41"></div>
<div class="sc" style="left:14.4px;top:80.40px;color:#cfcfcf"><span class="u">bootstra…</span></div>
<div class="sc" style="left:3.2px;top:91.40px;"><span class="as">*</span>,</div>
<div class="sc" style="left:3.2px;top:101.00px;"><span class="as">*</span>:before,</div>
<div class="sc" style="left:3.2px;top:110.70px;"><span class="as">*</span>:after {</div>
<div class="sc" style="left:16.8px;top:121.30px;"><span class="p st">-webkit-</span></div>
<div class="sc" style="left:31.7px;top:131.05px;"><span class="p st">box-</span></div>
<div class="sc" style="left:31.7px;top:140.80px;"><span class="p st">sizing</span></div>
<div class="sc" style="left:31.7px;top:150.55px;"><span class="st">: </span></div>
<div class="sc" style="left:31.7px;top:160.30px;"><span class="st">border-</span></div>
<div class="sc" style="left:31.7px;top:170.05px;"><span class="st">box;</span></div>
<div class="sc" style="left:16.8px;top:179.80px;"><span class="p st">-moz-</span></div>
<div class="sc" style="left:31.7px;top:189.55px;"><span class="p st">box-</span></div>
<div class="sc" style="left:31.7px;top:199.30px;"><span class="p st">sizing</span></div>
<div class="sc" style="left:31.7px;top:209.05px;"><span class="st">: </span></div>
<div class="sc" style="left:31.7px;top:218.80px;"><span class="st">border-</span></div>
<div class="sc" style="left:31.7px;top:228.55px;"><span class="st">box;</span></div>
<div class="sc" style="left:16.8px;top:238.30px;"><span class="p">box-</span></div>
<div class="sc" style="left:31.7px;top:248.05px;"><span class="p">sizing</span></div>
<div class="sc" style="left:31.7px;top:257.80px;"><span class="">:</span></div>
<div class="sc" style="left:31.7px;top:267.55px;"><span class="">border-</span></div>
<div class="sc" style="left:31.7px;top:277.30px;"><span class="">box;</span></div>
<div class="sc" style="left:3.2px;top:287.05px;"><span class="">}</span></div>
<div style="position:absolute;left:61.5px;top:21px;width:10.5px;height:276px;background:#292a2b"></div>
<div style="position:absolute;left:61.5px;top:21px;width:10.5px;height:40.4px;background:#3e3f41"></div>
  </div>
  <div id="crumbs">
<span style="position:absolute;left:5.5px;top:0;color:#5db0d7">html</span>
<span style="position:absolute;left:33.3px;top:0;color:#5db0d7">body<span style="color:#9bbbdc">.page-header-fixed</span></span>
<span style="position:absolute;left:134.7px;top:0;width:33px;height:16px;background:#202124"></span>
<span style="position:absolute;left:140px;top:0;color:#fff">script</span>

  </div>
</div>
</body>
</html>
